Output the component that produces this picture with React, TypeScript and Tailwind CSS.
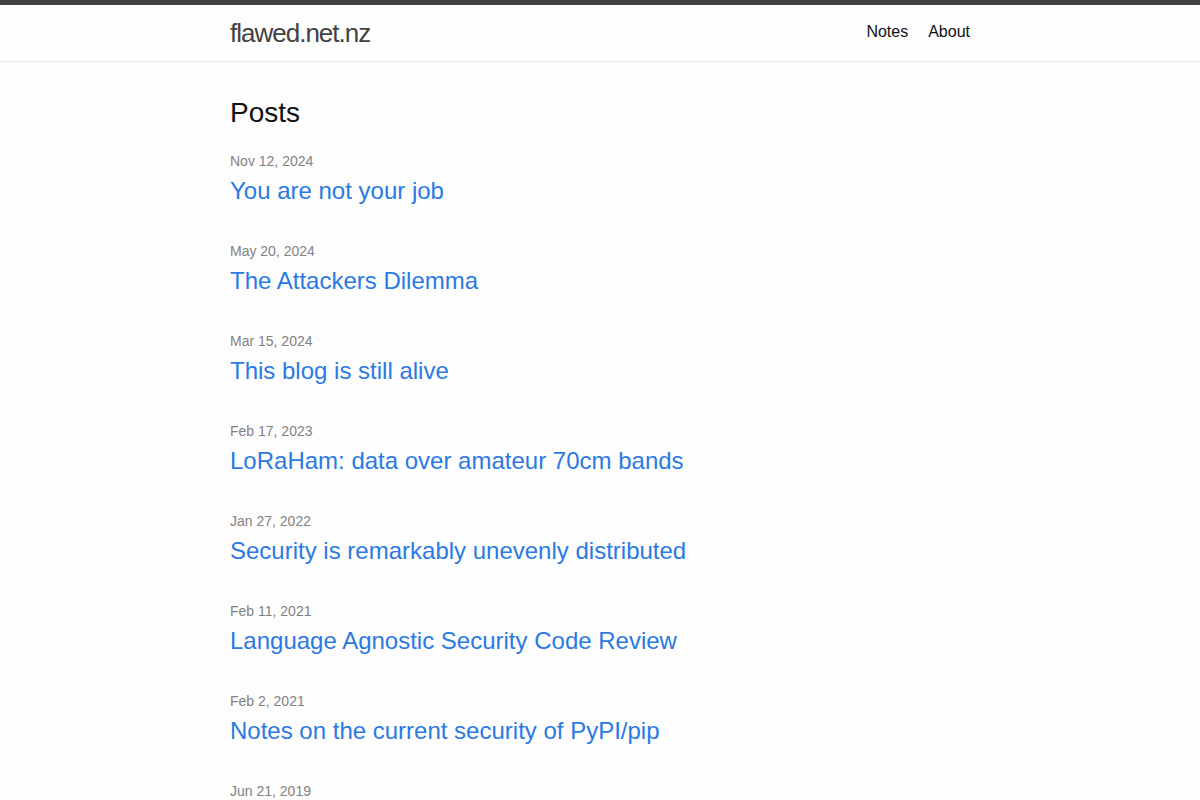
import React from "react";

const posts = [
  { date: "Nov 12, 2024", title: "You are not your job" },
  { date: "May 20, 2024", title: "The Attackers Dilemma" },
  { date: "Mar 15, 2024", title: "This blog is still alive" },
  { date: "Feb 17, 2023", title: "LoRaHam: data over amateur 70cm bands" },
  { date: "Jan 27, 2022", title: "Security is remarkably unevenly distributed" },
  { date: "Feb 11, 2021", title: "Language Agnostic Security Code Review" },
  { date: "Feb 2, 2021", title: "Notes on the current security of PyPI/pip" },
  { date: "Jun 21, 2019", title: "Reflections on a year of writing" },
];

export default function App() {
  return (
    <div
      className="min-h-screen bg-[#fdfdfd] text-[#111111] text-[16px] leading-[1.5]"
      style={{ fontFamily: '"Liberation Sans", Arial, Helvetica, sans-serif' }}
    >
      <header className="border-t-[5px] border-t-[#424242] border-b border-b-[#e8e8e8] min-h-[56px]">
        <div className="max-w-[740px] mx-auto flex justify-between items-start">
          <a className="text-[26px] font-light leading-[56px] tracking-[-1px] text-[#424242]">
            flawed.net.nz
          </a>
          <nav className="flex gap-5 leading-[54px] text-[#111111]">
            <a>Notes</a>
            <a>About</a>
          </nav>
        </div>
      </header>
      <main className="py-[30px]">
        <div className="max-w-[740px] mx-auto">
          <h2 className="text-[28px] leading-[42px] mb-[15px]">Posts</h2>
          <ul className="flex flex-col gap-[30px]">
            {posts.map((p) => (
              <li key={p.date}>
                <div className="h-6 leading-6">
                  <span className="text-[14px] text-[#828282]">{p.date}</span>
                </div>
                <h3 className="text-[24px] leading-[36px]">
                  <a className="text-[#2a7ae2]">{p.title}</a>
                </h3>
              </li>
            ))}
          </ul>
        </div>
      </main>
    </div>
  );
}
